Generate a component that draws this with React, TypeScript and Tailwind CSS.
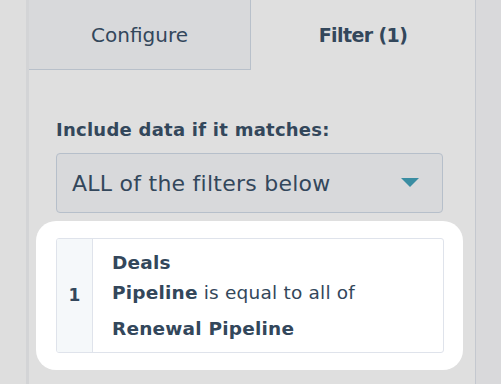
import React from 'react';

const font = { fontFamily: '"DejaVu Sans", "Noto Sans", sans-serif' };

export default function App() {
  return (
    <div className="flex h-[384px] w-[501px] overflow-hidden bg-[#dedede] text-[#33475b]" style={font}>
      {/* left gutter */}
      <div className="w-[26px] shrink-0 bg-[#dedede]" />

      {/* panel */}
      <div className="flex w-[450px] shrink-0 flex-col border-l-[3px] border-r border-l-[#d3d4d6] border-r-[#c4c8cf] bg-[#dfdfdf]">
        {/* tabs */}
        <div className="flex h-[70px]">
          <div className="flex w-[222px] items-center justify-center border-b border-r border-[#b8c0ca] bg-[#d8d9db] text-[20px]">
            Configure
          </div>
          <div className="flex flex-1 items-center justify-center text-[19px] font-bold tracking-[-0.6px]">
            Filter (1)
          </div>
        </div>

        {/* content */}
        <div className="flex flex-col pl-[7px] pr-[12px] pt-[48px]">
          <div className="px-[20px] text-[18px] font-bold leading-[24px] tracking-[0.25px]">
            Include data if it matches:
          </div>
          <div className="mx-[20px] mt-[11px] flex h-[60px] items-center justify-between rounded-[4px] border border-[#b6bfca] bg-[#d8d9db] pl-[15px] pr-[23px]">
            <span className="text-[22px] tracking-[0.25px]">ALL of the filters below</span>
            <svg width="18" height="10" viewBox="0 0 18 10">
              <path d="M0 0 L18 0 L9 9 Z" fill="#3a8da2" />
            </svg>
          </div>

          {/* highlighted filter card */}
          <div className="mt-[8px] rounded-[20px] bg-white py-[17px] pl-[20px] pr-[19px]">
            <div className="flex h-[115px] overflow-hidden rounded-[3px] border border-[#dfe3eb] bg-white">
              <div className="flex w-[36px] shrink-0 items-center justify-center border-r border-[#dfe3eb] bg-[#f5f8fa] text-[17px] font-bold">
                1
              </div>
              <div className="flex flex-col pl-[19px] pt-[10px] text-[18.5px] tracking-[0.2px]">
                <div className="font-bold leading-[28px]">Deals</div>
                <div className="leading-[32px]">
                  <span className="font-bold">Pipeline</span> is equal to all of
                </div>
                <div className="font-bold leading-[40px]">Renewal Pipeline</div>
              </div>
            </div>
          </div>
        </div>
      </div>

      {/* right gutter */}
      <div className="flex-1 bg-[#d9d9db]" />
    </div>
  );
}
